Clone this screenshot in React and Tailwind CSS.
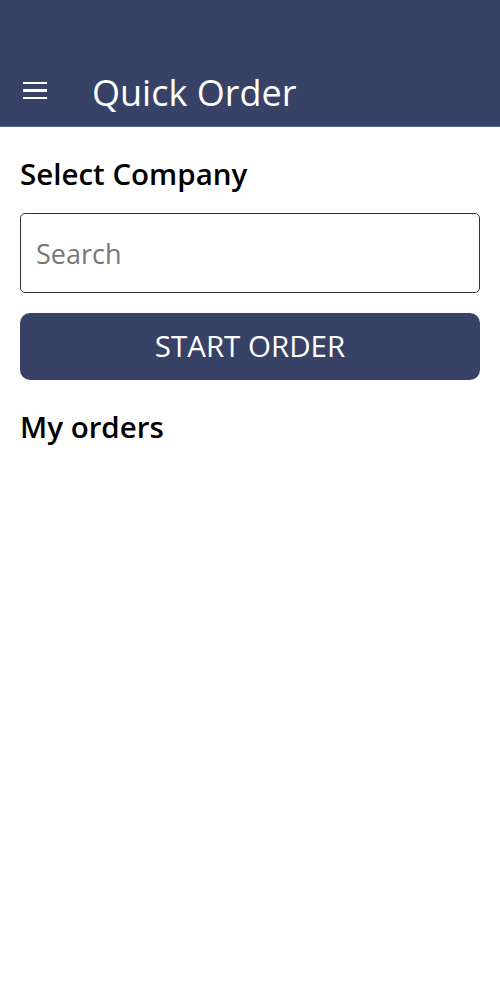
import React from 'react';

export default function App() {
  return (
    <div className="w-[500px] min-h-[1000px] bg-white" style={{ fontFamily: '"Open Sans", sans-serif' }}>
      <header className="h-[127px] bg-[#374266] border-b border-[#5a6590] flex items-end pb-[11px]">
        <button className="w-[24px] ml-[23px] mb-[16px] flex flex-col gap-[5px]">
          <span className="block h-[2.5px] bg-white" />
          <span className="block h-[2.5px] bg-white" />
          <span className="block h-[2.5px] bg-white" />
        </button>
        <h1 className="ml-[45px] text-[36px] leading-[44px] text-white font-normal">Quick Order</h1>
      </header>

      <main className="px-[20px]">
        <h2 className="mt-[28px] text-[29.5px] leading-[38px] font-semibold text-black">Select Company</h2>
        <input
          type="text"
          placeholder="Search"
          className="mt-[20px] w-full h-[80px] px-[15px] text-[27px] border-[1.5px] border-[#333] rounded-[5px] outline-none placeholder:text-[#777]"
        />
        <button className="mt-[20px] w-full h-[67px] rounded-[10px] bg-[#374266] text-white text-[29.5px]">
          START ORDER
        </button>
        <h2 className="mt-[28px] text-[29.5px] leading-[38px] font-semibold text-black">My orders</h2>
      </main>
    </div>
  );
}
